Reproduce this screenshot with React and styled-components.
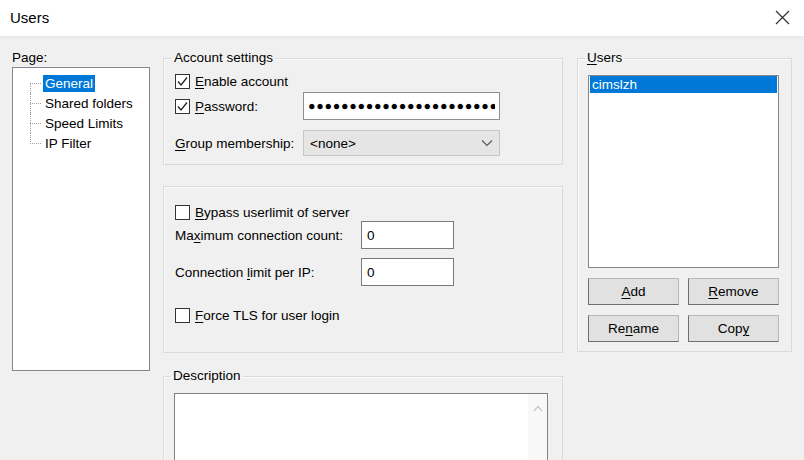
import styled, { createGlobalStyle } from "styled-components";

const GlobalStyle = createGlobalStyle`
  html, body {
    margin: 0;
    padding: 0;
    background: #f0f0f0;
  }
  body {
    font-family: "Liberation Sans", Arial, sans-serif;
    font-size: 13.5px;
    color: #000;
    overflow: hidden;
  }
`;

const pages = ["General", "Shared folders", "Speed Limits", "IP Filter"];

const Check = ({ checked }) => (
  <CheckBox>
    {checked && (
      <svg width="13" height="13" viewBox="0 0 13 13">
        <polyline
          points="2,6.5 5,10 11,2.5"
          fill="none"
          stroke="#222"
          strokeWidth="1.3"
        />
      </svg>
    )}
  </CheckBox>
);

const App = () => {
  return (
    <Window>
      <GlobalStyle />
      <TitleBar>
        <Title>Users</Title>
        <CloseButton>
          <svg width="15" height="15" viewBox="0 0 15 15">
            <path d="M1 1 L14 14 M14 1 L1 14" stroke="#333" strokeWidth="1.2" />
          </svg>
        </CloseButton>
      </TitleBar>

      <Body>
        <Column>
          <PlainLabel>Page:</PlainLabel>
          <Tree>
            {pages.map((page, i) => (
              <TreeItem key={page} $first={i === 0} $last={i === pages.length - 1}>
                <TreeLabel $selected={i === 0}>{page}</TreeLabel>
              </TreeItem>
            ))}
          </Tree>
        </Column>

        <Column>
          <Group $pad="7px 10px 0 11px" $h="115px">
            <Legend>Account settings</Legend>
            <CheckRow>
              <Check checked />
              <span>
                <Key>E</Key>nable account
              </span>
            </CheckRow>
            <FieldRow $mt="3px" $label="128px">
              <CheckRow>
                <Check checked />
                <span>
                  <Key>P</Key>assword:
                </span>
              </CheckRow>
              <PasswordInput type="text" readOnly value={"●".repeat(30)} />
            </FieldRow>
            <FieldRow $mt="10px" $label="128px">
              <span>
                <Key>G</Key>roup membership:
              </span>
              <Select>
                <span>&lt;none&gt;</span>
                <svg width="12" height="8" viewBox="0 0 12 8">
                  <polyline points="1,1.5 6,6.5 11,1.5" fill="none" stroke="#555" strokeWidth="1.1" />
                </svg>
              </Select>
            </FieldRow>
          </Group>

          <Group $pad="17px 10px 0 11px" $h="167px" $mt="21px">
            <CheckRow>
              <Check />
              <span>
                <Key>B</Key>ypass userlimit of server
              </span>
            </CheckRow>
            <FieldRow $mt="1px" $label="186px">
              <span>
                Ma<Key>x</Key>imum connection count:
              </span>
              <TextInput $w="93px" type="text" readOnly value="0" />
            </FieldRow>
            <FieldRow $mt="9px" $label="186px">
              <span>
                Connection <Key>l</Key>imit per IP:
              </span>
              <TextInput $w="93px" type="text" readOnly value="0" />
            </FieldRow>
            <CheckRow $mt="21px">
              <Check />
              <span>
                <Key>F</Key>orce TLS for user login
              </span>
            </CheckRow>
          </Group>

          <Group $pad="9px 14px 0 10px" $h="140px" $mt="15px">
            <Legend>Description</Legend>
            <DescBox>
              <DescText />
              <ScrollTrack>
                <svg width="10" height="7" viewBox="0 0 10 7">
                  <polyline points="1,6 5,1.5 9,6" fill="none" stroke="#b5b5b5" strokeWidth="1.1" />
                </svg>
              </ScrollTrack>
            </DescBox>
          </Group>
        </Column>

        <Column>
          <Group $pad="9px 10px 0 10px" $h="302px">
            <Legend>
              <Key>U</Key>sers
            </Legend>
            <ListBox>
              <ListRow $selected>cimslzh</ListRow>
            </ListBox>
            <ButtonGrid>
              <Button>
                <Key>A</Key>dd
              </Button>
              <Button>
                <Key>R</Key>emove
              </Button>
              <Button>
                Re<Key>n</Key>ame
              </Button>
              <Button>
                Cop<Key>y</Key>
              </Button>
            </ButtonGrid>
          </Group>
        </Column>
      </Body>
    </Window>
  );
};

export default App;

const Window = styled.div`
  width: 804px;
  height: 460px;
  overflow: hidden;
  background: #f0f0f0;
  display: flex;
  flex-direction: column;
`;

const TitleBar = styled.div`
  height: 36px;
  flex-shrink: 0;
  box-sizing: border-box;
  background: #fff;
  display: flex;
  align-items: center;
  justify-content: space-between;
  padding: 0 14px 2px 10px;
  box-shadow: 0 1px 4px rgba(0, 0, 0, 0.05);
`;

const Title = styled.div`
  font-size: 15px;
`;

const CloseButton = styled.div`
  display: flex;
  align-items: center;
`;

const Body = styled.div`
  display: grid;
  grid-template-columns: 138px 400px 216px;
  column-gap: 13px;
  padding: 14px 0 0 12px;
  & > :last-child {
    margin-left: 1px;
  }
`;

const Column = styled.div`
  display: flex;
  flex-direction: column;
`;

const PlainLabel = styled.div`
  line-height: 16px;
`;

const Tree = styled.div`
  margin-top: 1px;
  height: 304px;
  box-sizing: border-box;
  background: #fff;
  border: 1px solid #828790;
  padding: 5px 0 0 17px;
`;

const TreeItem = styled.div`
  position: relative;
  height: 20px;
  display: flex;
  align-items: center;
  padding-left: 13px;

  &::before {
    content: "";
    position: absolute;
    left: 0;
    top: 10px;
    width: 11px;
    border-top: 1px dotted #a0a0a0;
  }
  &::after {
    content: "";
    position: absolute;
    left: 0;
    top: ${(p) => (p.$first ? "10px" : "0")};
    bottom: ${(p) => (p.$last ? "9px" : "0")};
    border-left: 1px dotted #a0a0a0;
  }
`;

const TreeLabel = styled.span`
  padding: 0 2px;
  line-height: 17px;
  background: ${(p) => (p.$selected ? "#0078d7" : "transparent")};
  color: ${(p) => (p.$selected ? "#fff" : "#000")};
`;

const Group = styled.fieldset`
  margin: ${(p) => p.$mt || "0"} 0 0 0;
  min-width: 0;
  box-sizing: border-box;
  height: ${(p) => p.$h};
  border: 1px solid #dadada;
  box-shadow: inset 1px 1px 0 #fafafa;
  padding: ${(p) => p.$pad};
  display: flex;
  flex-direction: column;
`;

const Legend = styled.legend`
  padding: 0 2px;
  margin-left: -3px;
  line-height: 16px;
`;

const Key = styled.span`
  text-decoration: underline;
  text-underline-offset: 2px;
`;

const CheckRow = styled.div`
  display: flex;
  align-items: center;
  gap: 5px;
  height: 16px;
  margin-top: ${(p) => p.$mt || "0"};
`;

const CheckBox = styled.span`
  width: 15px;
  height: 15px;
  box-sizing: border-box;
  border: 1px solid #333;
  background: #fff;
  display: flex;
  align-items: center;
  justify-content: center;
`;

const FieldRow = styled.div`
  display: grid;
  grid-template-columns: ${(p) => p.$label} auto;
  align-items: center;
  margin-top: ${(p) => p.$mt || "0"};
`;

const TextInput = styled.input`
  box-sizing: border-box;
  width: ${(p) => p.$w};
  height: 28px;
  border: 1px solid #7a7a7a;
  background: #fff;
  font: inherit;
  padding: 0 5px;
  outline: none;
`;

const PasswordInput = styled(TextInput)`
  width: 197px;
  border-color: #8f8f8f;
  font-size: 12.5px;
  letter-spacing: 0.7px;
  padding: 0 4px;
`;

const Select = styled.div`
  box-sizing: border-box;
  width: 197px;
  height: 26px;
  background: #e5e5e5;
  border: 1px solid #c6c6c6;
  display: flex;
  align-items: center;
  justify-content: space-between;
  padding: 0 6px 0 6px;
`;

const DescBox = styled.div`
  display: flex;
  height: 120px;
  border: 1px solid #828282;
  background: #fff;
`;

const DescText = styled.div`
  flex: 1;
`;

const ScrollTrack = styled.div`
  width: 19px;
  background: #f8f8f8;
  display: flex;
  justify-content: center;
  padding-top: 11px;
`;

const ListBox = styled.div`
  box-sizing: border-box;
  width: 191px;
  height: 193px;
  background: #fff;
  border: 1px solid #828790;
  padding: 0 1px;
`;

const ListRow = styled.div`
  height: 17px;
  line-height: 17px;
  padding-left: 2px;
  background: ${(p) => (p.$selected ? "#0078d7" : "transparent")};
  color: ${(p) => (p.$selected ? "#fff" : "#000")};
`;

const ButtonGrid = styled.div`
  display: grid;
  grid-template-columns: 91px 91px;
  column-gap: 9px;
  row-gap: 10px;
  margin-top: 10px;
`;

const Button = styled.div`
  height: 27px;
  box-sizing: border-box;
  background: #e1e1e1;
  border: 1px solid #b8b8b8;
  border-left-color: #6e6e6e;
  border-bottom-color: #6e6e6e;
  display: flex;
  align-items: center;
  justify-content: center;
`;
